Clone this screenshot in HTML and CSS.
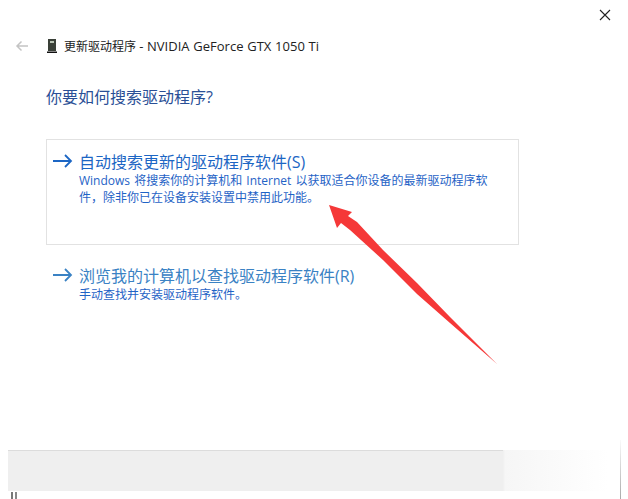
FILE: index.html
```html
<!DOCTYPE html>
<html lang="zh-CN">
<head>
	<meta charset="UTF-8">
	<title>更新驱动程序</title>
	<link rel="stylesheet" href="styles.css">
</head>
<body>
	<div class="dialog">
		<div class="titlebar">
			<svg class="close" width="12" height="12" viewBox="0 0 12 12"><path d="M1 1L11 11M11 1L1 11" stroke="#222" stroke-width="1.1" fill="none"/></svg>
		</div>
		<div class="nav">
			<svg class="back" width="14" height="12" viewBox="0 0 14 12"><path d="M13 6H2M6.500 1.500L2 6l4.500 4.500" stroke="#c4c4c4" stroke-width="1.500" fill="none"/></svg>
			<svg class="device" width="10" height="14" viewBox="0 0 10 14"><rect x="1" y="0" width="8" height="12" fill="#3a4038"/><rect x="3" y="2" width="4" height="2" fill="#b9c4b4"/><rect x="0" y="12.500" width="10" height="1.500" fill="#111"/></svg>
			<span class="nav_title">更新驱动程序 <span class="nav_name">- NVIDIA GeForce GTX 1050 Ti</span></span>
		</div>
		<h1 class="heading">你要如何搜索驱动程序?</h1>
		<div class="option option_cur">
			<div class="option_title">
				<svg class="arrow" width="21" height="14" viewBox="0 0 21 14"><path d="M0 7H18M12 1l6 6-6 6" stroke="currentColor" stroke-width="1.800" fill="none"/></svg>
				<span>自动搜索更新的驱动程序软件(S)</span>
			</div>
			<p class="option_desc">Windows 将搜索你的计算机和 Internet 以获取适合你设备的最新驱动程序软件，除非你已在设备安装设置中禁用此功能。</p>
		</div>
		<div class="option option_second">
			<div class="option_title">
				<svg class="arrow" width="21" height="14" viewBox="0 0 21 14"><path d="M0 7H18M12 1l6 6-6 6" stroke="currentColor" stroke-width="1.800" fill="none"/></svg>
				<span>浏览我的计算机以查找驱动程序软件(R)</span>
			</div>
			<p class="option_desc">手动查找并安装驱动程序软件。</p>
		</div>
		<div class="footer"></div>
		<div class="footer_marks"></div>
	</div>
	<!-- 红色箭头标注 -->
	<svg class="mark" width="628" height="499" viewBox="0 0 628 499"><polygon points="329,205 352,212 348,216 357,222 383,250 417,283 450,317 497,364 450,323 417,294 383,260 350,230 341,223 337,228" fill="#f53838"/></svg>
</body>
</html>
```

FILE: styles.css
```css
*{
	margin: 0;
	padding: 0;
	box-sizing: border-box;
}
html,body{
	height: 100%;
	background-color: #fff;
	overflow: hidden;
}
body{
	font-family: "Open Sans", "Noto Sans CJK SC", sans-serif;
}
.dialog{
	position: relative;
	width: 628px;
	height: 499px;
	display: flex;
	flex-direction: column;
}
.dialog > *{
	flex-shrink: 0;
}
/* 右边缘的灰线 */
.dialog::after{
	content: "";
	position: absolute;
	top: 440px;
	left: 620px;
	width: 1px;
	height: 59px;
	background: linear-gradient(to bottom, #fafafa, #aaa);
}
.titlebar{
	height: 39px;
	display: flex;
	justify-content: flex-end;
	padding: 9px 17px 0 0;
}
.nav{
	height: 14px;
	display: flex;
	align-items: center;
	padding-left: 15px;
}
.nav .device{
	margin-left: 18px;
}
.nav_title{
	margin-left: 7px;
	font-size: 12px;
	color: #222;
}
.nav_name{
	font-size: 13px;
	word-spacing: 0.4px;
}
.heading{
	margin: 32px 0 0 46px;
	font-size: 16px;
	line-height: 24px;
	font-weight: normal;
	color: #2a4f96;
}
.option{
	margin-left: 46px;
	width: 473px;
	padding: 10px 12px;
	border: 1px solid transparent;
}
.option_cur{
	margin-top: 30px;
	height: 106px;
	border-color: #e2e2e2;
	color: #1c66c4;
}
.option_second{
	margin-top: 8px;
	height: 64px;
	color: #3a82c4;
}
.option_title{
	display: flex;
	align-items: center;
	height: 22px;
	font-size: 16px;
}
.arrow{
	margin-left: -6px;
	margin-right: 5px;
	flex-shrink: 0;
}
.option_desc{
	margin-left: 20px;
	width: 420px;
	font-size: 12px;
	line-height: 17px;
	word-spacing: 1px;
	color: #1f63c6;
}
.footer{
	margin: 133px 0 0 8px;
	width: 600px;
	height: 41px;
	background:
		linear-gradient(to right, #dcdcdc 495px, transparent 495px) top / 100% 1px no-repeat,
		linear-gradient(to right, #efefef 495px, #f6f6f6 497px, #fff 100%);
}
.footer_marks{
	margin: 1px 0 0 11px;
	width: 6px;
	height: 7px;
	border-left: 2px solid #777;
	border-right: 2px solid #888;
}
.mark{
	position: absolute;
	top: 0;
	left: 0;
}
```
